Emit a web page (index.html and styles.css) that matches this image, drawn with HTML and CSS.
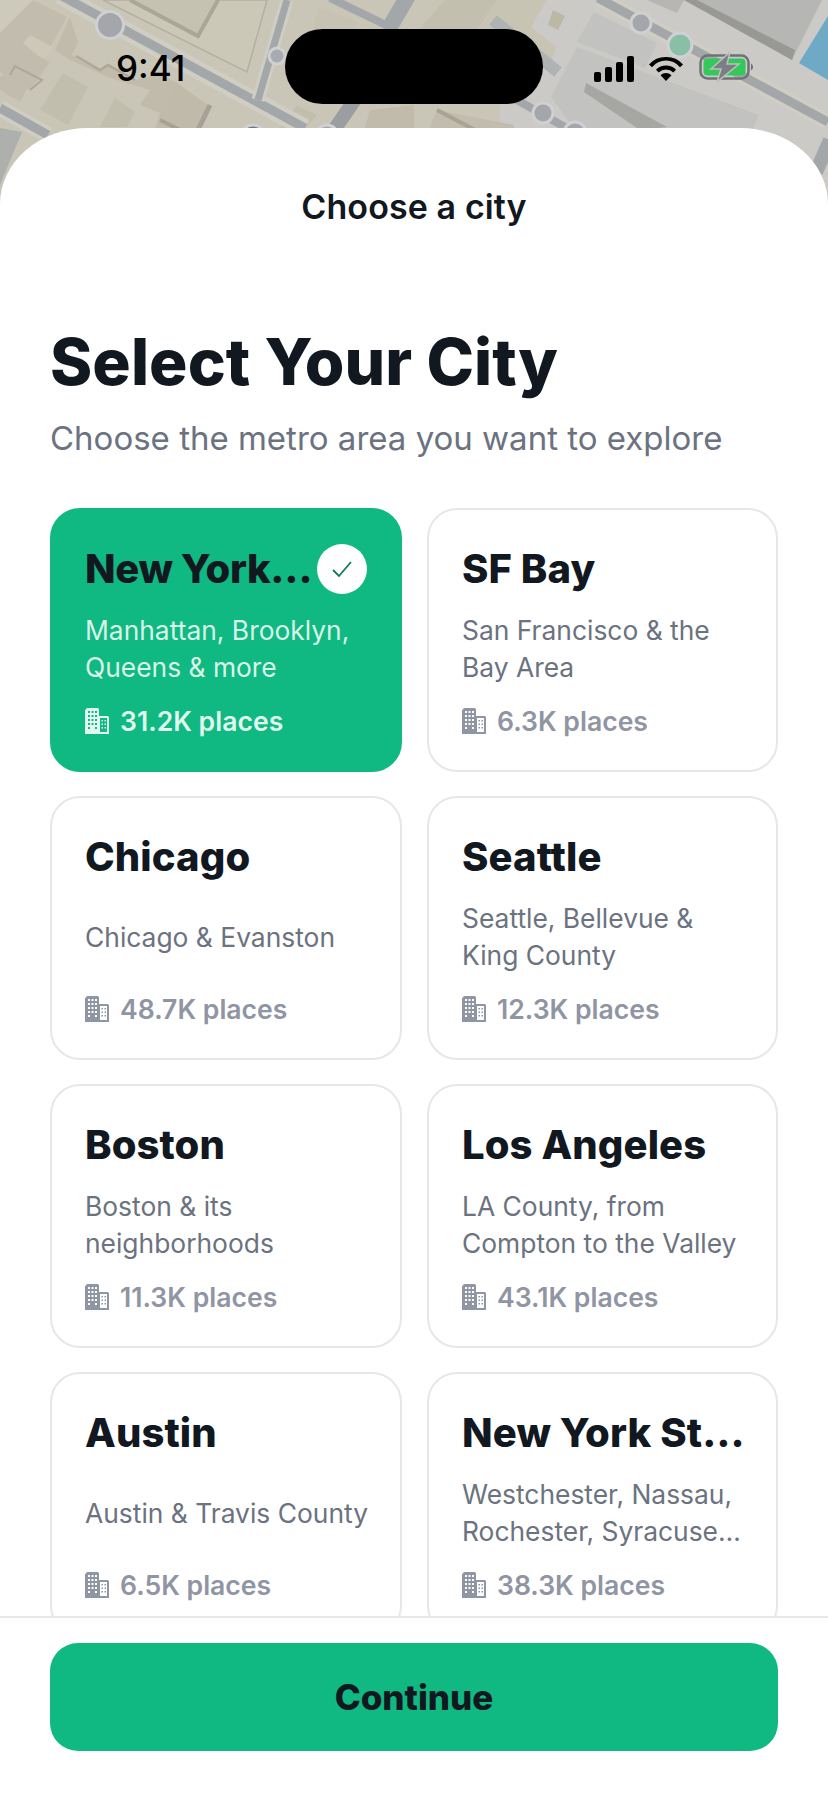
FILE: index.html
```html
<!DOCTYPE html>
<html lang="en">
<head>
<meta charset="utf-8">
<title>Choose a city</title>
<link rel="stylesheet" href="styles.css">
</head>
<body>
<svg width="0" height="0" class="defs">
  <symbol id="bld" viewBox="0 0 24 26">
    <path class="ic" d="M1 1.500A1.500 1.500 0 0 1 2.500 0H12.500A1.500 1.500 0 0 1 14 1.500V8H22.500A1.500 1.500 0 0 1 24 9.500V26H0V2Z"/>
    <path class="win" d="M3 3h2v2H3zM6.500 3h2v2h-2zM10 3h2v2h-2zM3 7h2v2H3zM6.500 7h2v2h-2zM10 7h2v2h-2zM3 11h2v2H3zM6.500 11h2v2h-2zM10 11h2v2h-2zM3 15h2v2H3zM6.500 15h2v2h-2zM10 15h2v2h-2zM3 19h2v2H3zM10 19h2v2h-2z"/>
    <path class="win" d="M15 10h7v14h-7z"/>
    <path class="ic" d="M16.500 12h1.500v1.500h-1.500zM19.500 12H21v1.500h-1.500zM16.500 15.500h1.500V17h-1.500zM19.500 15.500H21V17h-1.500zM16.500 19h1.500v1.500h-1.500zM19.500 19H21v1.500h-1.500z"/>
  </symbol>
</svg>

<svg class="map" viewBox="0 0 828 210" width="828" height="210">
  <rect width="828" height="210" fill="#c9c6b8"/>
  <polygon points="500,0 828,0 828,210 480,210" fill="#cbcac6"/>
  <polygon points="0,0 33,0 0,33" fill="#cdc9bb"/>
  <polygon points="33,0 67,17 43,60 0,37 0,33" fill="#c1bcad"/>
  <polygon points="23,43 30,35 53,47 43,60" fill="#cdc9b9"/>
  <polygon points="0,37 50,62 30,90 0,72" fill="#c1bcad"/>
  <polygon points="0,77 15,66 28,87 20,102 0,90" fill="#c1bcad"/>
  <polyline points="10,75 15,66 42,80 30,90" fill="none" stroke="#aca899" stroke-width="2"/>
  <polygon points="40,110 63,73 88,87 68,125" fill="#c2beae"/>
  <polygon points="100,127 115,98 135,112 127,127" fill="#c2beae"/>
  <polygon points="78,42 72,55 76,58 100,70 108,65 135,80 160,74 177,83 210,107 198,127 160,113 140,105 150,90 110,78 70,60 55,50 70,17" fill="#c0bbab"/>
  <polyline points="76,56 100,70 108,65 135,80" fill="none" stroke="#aca899" stroke-width="2.500"/>
  <polygon points="160,113 177,83 210,107 198,130 155,130" fill="#bfbaaa"/>
  <polyline points="210,105 198,130" fill="none" stroke="#a5a194" stroke-width="5"/>
  <polyline points="160,120 180,130" fill="none" stroke="#a5a194" stroke-width="4"/>
  <polygon points="103,0 267,0 247,72" fill="#cbc8b8" stroke="#b3afa2" stroke-width="1.500"/>
  <polygon points="130,0 218,0 200,36" fill="#c6c2b1"/>
  <polyline points="130,0 198,36 218,0" fill="none" stroke="#aaa698" stroke-width="4"/>
  <polygon points="318,8 358,22 338,78 297,98" fill="#c6c3b3"/>
  <polygon points="297,105 317,115 305,128 280,128" fill="#c2beae"/>
  <polygon points="370,110 414,105 414,128 365,128" fill="#c0bbab"/>
  <polygon points="414,0 500,0 500,128 414,128" fill="#c9c6b8"/>
  <polygon points="420,28 445,0 497,0 470,40 440,55" fill="#c3bfae"/>
  <polygon points="498,0 547,0 531,27 556,47 548,70 500,40 480,30" fill="#c7c4b3"/>
  <polygon points="553,10 565,16 558,30 548,25" fill="#bcb8a6"/>
  <polygon points="430,127 437,110 514,125 514,130 430,130" fill="#c1bcad"/>
  <polyline points="437,110 475,130" fill="none" stroke="#a8a494" stroke-width="4"/>
  <polygon points="577,42 594,12 657,43 645,68" fill="#c2c2c0"/>
  <polygon points="551,97 577,47 759,115 752,130 575,130" fill="#c2c2c0"/>
  <polygon points="586,83 667,127 640,130 584,92" fill="#a6a6a3"/>
  <polygon points="684,0 822,0 792,60" fill="#b6b7b4"/>
  <polygon points="684,0 697,0 795,50 792,60" fill="#989995"/>
  <polygon points="647,0 684,0 677,13" fill="#b6b7b4"/>
  <polygon points="828,16 799,63 828,80" fill="#6ea9c6"/>
  <polygon points="0,128 22,132 0,185" fill="#aeb0ae"/>
  <g fill="none">
    <path d="M60 -5L305 128" stroke="#d0cec3" stroke-width="18"/>
    <path d="M60 -5L305 128" stroke="#a3a7a9" stroke-width="9"/>
    <path d="M287 0L258 100" stroke="#d0cec3" stroke-width="13"/>
    <path d="M287 0L258 100" stroke="#a3a7a9" stroke-width="7"/>
    <path d="M0 108L48 135" stroke="#d0cec3" stroke-width="16"/>
    <path d="M0 108L48 135" stroke="#a3a7a9" stroke-width="9"/>
    <path d="M356 98L334 130" stroke="#9b9ea1" stroke-width="14"/>
    <path d="M408 -4L388 30" stroke="#a3a7a9" stroke-width="16"/>
    <path d="M330 -2L388 26" stroke="#a3a7a9" stroke-width="8"/>
    <path d="M493 20L558 72" stroke="#b0b3b4" stroke-width="12"/>
    <path d="M517 100L570 130" stroke="#a3a7a9" stroke-width="8"/>
    <path d="M598 -2L828 122" stroke="#d0cec3" stroke-width="16"/>
    <path d="M598 -2L828 122" stroke="#a3a7a9" stroke-width="9"/>
    <path d="M830 140L816 172" stroke="#a3a7a9" stroke-width="14"/>
  </g>
  <g stroke="#cfd0d2" stroke-width="3">
    <circle cx="110" cy="25" r="13.500" fill="#a4a6ab"/>
    <circle cx="277" cy="56" r="8" fill="#a9abb0"/>
    <circle cx="253" cy="137" r="12" fill="#6e7480"/>
    <circle cx="327" cy="136" r="11" fill="#a4a6ab"/>
    <circle cx="641" cy="23" r="10" fill="#a4a6ab"/>
    <circle cx="543" cy="113" r="10" fill="#a4a6ab"/>
    <circle cx="575" cy="133" r="11" fill="#a4a6ab"/>
    <circle cx="680" cy="45" r="12" fill="#88bfa5"/>
  </g>
</svg>

<div class="status">
  <span class="time">9:41</span>
  <div class="island"></div>
  <div class="status-icons">
    <svg class="sig" viewBox="0 0 40 26" width="40" height="26"><rect x="0" y="16" width="7" height="10" rx="2"/><rect x="11" y="11" width="7" height="15" rx="2"/><rect x="22" y="6" width="7" height="20" rx="2"/><rect x="33" y="0" width="7" height="26" rx="2"/></svg>
    <svg class="wifi" viewBox="0 0 34 26" width="34" height="26"><path d="M17 26L11.500 20.200A8 8 0 0 1 22.500 20.200Z"/><path d="M17 10.500A14 14 0 0 1 27 14.700L24.300 17.500A10.200 10.200 0 0 0 9.700 17.500L7 14.700A14 14 0 0 1 17 10.500Z"/><path d="M17 2A22.500 22.500 0 0 1 34 9.400L31 12.300A18 18 0 0 0 3 12.300L0 9.400A22.500 22.500 0 0 1 17 2Z"/></svg>
    <svg class="bat" viewBox="0 0 56 30" width="56" height="30">
      <rect x="1.500" y="3.500" width="48" height="23" rx="7" fill="none" stroke="#6f727a" stroke-width="2.500"/>
      <rect x="4.500" y="6.500" width="42" height="17" rx="4" fill="#34c759"/>
      <path d="M52 11.500a4 4 0 0 1 0 7z" fill="#6f727a"/>
      <path d="M31 0L12 17H22L18 30L40 12H28Z" fill="#7b7e86" stroke="#bfc0bc" stroke-width="1.500"/>
    </svg>
  </div>
</div>

<main class="sheet">
  <header class="nav">Choose a city</header>
  <div class="scroll">
    <h1 class="heading">Select Your City</h1>
    <p class="sub">Choose the metro area you want to explore</p>
    <div class="grid">
      <article class="card selected">
        <div class="card-head">
          <h2 class="name">New York City</h2>
          <span class="check"><svg viewBox="0 0 24 24" width="24" height="24"><path d="M3 13L9 19L21 5" fill="none" stroke="#0f7a55" stroke-width="1.800"/></svg></span>
        </div>
        <div class="desc"><span class="clamp">Manhattan, Brooklyn, Queens &amp; more</span></div>
        <div class="places"><svg class="bicon" width="24" height="26"><use href="#bld"/></svg>31.2K places</div>
      </article>
      <article class="card">
        <div class="card-head"><h2 class="name">SF Bay</h2></div>
        <div class="desc"><span class="clamp">San Francisco &amp; the Bay Area</span></div>
        <div class="places"><svg class="bicon" width="24" height="26"><use href="#bld"/></svg>6.3K places</div>
      </article>
      <article class="card">
        <div class="card-head"><h2 class="name">Chicago</h2></div>
        <div class="desc"><span class="clamp">Chicago &amp; Evanston</span></div>
        <div class="places"><svg class="bicon" width="24" height="26"><use href="#bld"/></svg>48.7K places</div>
      </article>
      <article class="card">
        <div class="card-head"><h2 class="name">Seattle</h2></div>
        <div class="desc"><span class="clamp">Seattle, Bellevue &amp; King County</span></div>
        <div class="places"><svg class="bicon" width="24" height="26"><use href="#bld"/></svg>12.3K places</div>
      </article>
      <article class="card">
        <div class="card-head"><h2 class="name">Boston</h2></div>
        <div class="desc"><span class="clamp">Boston &amp; its neighborhoods</span></div>
        <div class="places"><svg class="bicon" width="24" height="26"><use href="#bld"/></svg>11.3K places</div>
      </article>
      <article class="card">
        <div class="card-head"><h2 class="name">Los Angeles</h2></div>
        <div class="desc"><span class="clamp">LA County, from Compton to the Valley</span></div>
        <div class="places"><svg class="bicon" width="24" height="26"><use href="#bld"/></svg>43.1K places</div>
      </article>
      <article class="card">
        <div class="card-head"><h2 class="name">Austin</h2></div>
        <div class="desc"><span class="clamp">Austin &amp; Travis County</span></div>
        <div class="places"><svg class="bicon" width="24" height="26"><use href="#bld"/></svg>6.5K places</div>
      </article>
      <article class="card">
        <div class="card-head"><h2 class="name">New York State</h2></div>
        <div class="desc"><span class="clamp">Westchester, Nassau, Rochester, Syracuse…</span></div>
        <div class="places"><svg class="bicon" width="24" height="26"><use href="#bld"/></svg>38.3K places</div>
      </article>
    </div>
  </div>
  <footer class="footer">
    <button class="continue" type="button">Continue</button>
  </footer>
</main>
</body>
</html>
```

FILE: styles.css
```css
* { box-sizing: border-box; }
html, body { margin: 0; padding: 0; }
body {
  position: relative;
  width: 828px;
  height: 1800px;
  overflow: hidden;
  background: #fff;
  font-family: Inter, "Liberation Sans", sans-serif;
  color: #11181f;
}
.defs { position: absolute; }
.map { position: absolute; left: 0; top: 0; }

.status {
  position: absolute;
  left: 0;
  top: 0;
  width: 828px;
  height: 128px;
}
.time {
  position: absolute;
  left: 116px;
  top: 47px;
  font-size: 35px;
  line-height: 42px;
  font-weight: 500;
  color: #000;
}
.island {
  position: absolute;
  left: 285px;
  top: 29px;
  width: 258px;
  height: 75px;
  border-radius: 38px;
  background: #000;
}
.status-icons {
  position: absolute;
  left: 594px;
  top: 52px;
  display: flex;
  align-items: center;
  gap: 15px;
}
.sig, .wifi { fill: #000; }
.sig { margin-top: 4px; }
.wifi { margin-top: 2px; }
.bat { margin-left: 1px; }

.sheet {
  position: relative;
  margin-top: 128px;
  height: 1672px;
  display: flex;
  flex-direction: column;
  background: #fff;
  border-radius: 88px 88px 0 0 / 76px 76px 0 0;
}
.nav {
  flex: none;
  height: 104px;
  padding-top: 58px;
  text-align: center;
  font-size: 34px;
  line-height: 42px;
  font-weight: 600;
  letter-spacing: 0.1px;
}
.scroll {
  flex: 1;
  min-height: 0;
  overflow: hidden;
  padding: 90px 50px 0;
}
.heading {
  margin: 0;
  font-size: 64px;
  line-height: 80px;
  font-weight: 800;
  letter-spacing: 0.1px;
}
.sub {
  margin: 15px 0 0;
  font-size: 33px;
  line-height: 42px;
  font-weight: 400;
  color: #6b7280;
}
.grid {
  margin-top: 49px;
  display: grid;
  grid-template-columns: 352px 351px;
  grid-auto-rows: 264px;
  gap: 24px 25px;
}
.card {
  --win: #fff;
  display: flex;
  flex-direction: column;
  padding: 34px 33px 0;
  background: #fff;
  border: 2px solid #e5e7eb;
  border-radius: 30px;
  min-width: 0;
}
.card.selected {
  --win: #10b981;
  background: #10b981;
  border-color: #10b981;
}
.card-head {
  display: flex;
  align-items: center;
  gap: 4px;
  height: 50px;
  min-width: 0;
}
.name {
  flex: 1;
  min-width: 0;
  margin: 0 -6px 0 0;
  font-size: 40px;
  line-height: 50px;
  font-weight: 800;
  letter-spacing: 0.1px;
  white-space: nowrap;
  overflow: hidden;
  text-overflow: ellipsis;
}
.selected .name { letter-spacing: -0.4px; }
.check {
  flex: none;
  width: 50px;
  height: 50px;
  border-radius: 50%;
  background: #fff;
  display: flex;
  align-items: center;
  justify-content: center;
}
.desc {
  display: flex;
  align-items: center;
  height: 74px;
  margin-top: 18px;
  margin-right: -8px;
  font-size: 26.400px;
  line-height: 37px;
  color: #6b7280;
}
.clamp {
  display: -webkit-box;
  -webkit-box-orient: vertical;
  -webkit-line-clamp: 2;
  overflow: hidden;
}
.selected .desc { color: rgba(255, 255, 255, 0.85); }
.places {
  display: flex;
  align-items: center;
  gap: 11px;
  margin-top: 18px;
  font-size: 26.600px;
  line-height: 34px;
  font-weight: 600;
  color: #8f95a3;
}
.selected .places { color: rgba(255, 255, 255, 0.88); }
.bicon { flex: none; fill: currentColor; }
.ic { fill: currentColor; }
.win { fill: var(--win); }

.footer {
  flex: none;
  height: 184px;
  padding: 25px 50px 0;
  background: #fff;
  border-top: 2px solid #e5e7eb;
}
.continue {
  display: block;
  width: 100%;
  height: 108px;
  border: 0;
  border-radius: 28px;
  background: #10b981;
  color: #11181f;
  font-family: inherit;
  font-size: 35px;
  font-weight: 800;
}
```
